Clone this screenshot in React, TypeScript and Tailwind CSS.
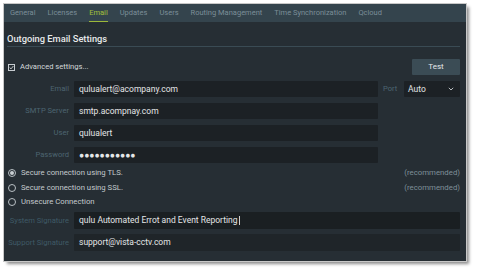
import React from "react";

const tabs = ["General", "Licenses", "Email", "Updates", "Users", "Routing Management", "Time Synchronization", "Qcloud"];

function Row({ label, value, wide, children }: { label: string; value: string; wide?: boolean; children?: React.ReactNode }) {
  return (
    <div className="flex items-center h-[16px]">
      <div className="w-[62px] text-right text-[7.6px] text-[#4d6571] leading-none whitespace-nowrap">{label}</div>
      <div className={`ml-[5px] h-full bg-[#1c2125] rounded-[1px] flex items-center pl-[5px] text-[8.5px] text-[#e4e6e7] ${wide ? "w-[386px]" : "w-[304px]"}`}>
        {value}
      </div>
      {children}
    </div>
  );
}

function Radio({ label, checked, rec }: { label: string; checked?: boolean; rec?: boolean }) {
  return (
    <div className="flex items-center h-[14.5px]">
      <div className="ml-[1px] w-[8px] h-[8px] rounded-full border border-[#b9c0c4] flex items-center justify-center">
        {checked && <div className="w-[4px] h-[4px] rounded-full bg-[#c9cfd2]" />}
      </div>
      <div className="ml-[5px] text-[7.75px] text-[#c4cacd] leading-none">{label}</div>
      {rec && <div className="ml-auto text-[7.8px] text-[#7f8f99] leading-none">(recommended)</div>}
    </div>
  );
}

export default function App() {
  return (
    <div className="w-[477px] h-[272px] bg-white pl-[4px] pt-[4px]" style={{ fontFamily: "Roboto, 'Liberation Sans', sans-serif" }}>
      <div className="w-[462px] h-[257px] bg-[#262e34] shadow-[3px_3px_3px_rgba(0,0,0,0.45)] outline outline-1 outline-[#c8c8c8] flex flex-col">
        <div className="h-[18px] bg-[#34444d] flex items-stretch pl-[6px] gap-[12px]">
          {tabs.map((t) => (
            <div key={t} className="relative flex items-center text-[7.5px] leading-none whitespace-nowrap">
              <span className={t === "Email" ? "text-[#a3c13b]" : "text-[#7b8e98]"}>{t}</span>
              {t === "Email" && <div className="absolute left-0 right-0 bottom-[0px] h-[1.5px] bg-[#9cb83a]" />}
            </div>
          ))}
        </div>
        <div className="pl-[3px] pr-[6px] flex flex-col">
          <div className="h-[25px] flex items-end pb-[1px] border-b border-[#3a4b54]">
            <span className="text-[9.3px] font-medium leading-[12px] text-[#e8eaeb]">Outgoing Email Settings</span>
          </div>
          <div className="mt-[12px] h-[16px] flex items-center">
            <div className="ml-[1px] w-[7px] h-[7px] border border-[#c6ccd0] flex items-center justify-center">
              <svg width="5" height="5" viewBox="0 0 5 5"><path d="M0.6 2.5 L2 3.9 L4.4 1" stroke="#d0d5d8" strokeWidth="0.9" fill="none" /></svg>
            </div>
            <span className="ml-[5px] text-[7.6px] text-[#d3d8da] leading-none">Advanced settings...</span>
            <div className="ml-auto w-[48px] h-[16px] bg-[#3b4c55] rounded-[1px] flex items-center justify-center text-[8px] text-[#e6e9ea]">Test</div>
          </div>
          <div className="mt-[6px] flex flex-col gap-[6px]">
            <Row label="Email" value="qulualert@acompany.com">
              <span className="ml-[5px] text-[7.6px] text-[#4d6571] leading-none">Port</span>
              <div className="ml-auto w-[56px] h-full bg-[#1c2125] rounded-[1px] flex items-center pl-[4px] pr-[6px] text-[8.5px] text-[#e4e6e7]">
                Auto
                <svg className="ml-auto" width="6" height="4" viewBox="0 0 6 4"><path d="M0.8 0.8 L3 3 L5.2 0.8" stroke="#c9ced1" strokeWidth="0.9" fill="none" /></svg>
              </div>
            </Row>
            <Row label="SMTP Server" value="smtp.acompnay.com" />
            <Row label="User" value="qulualert" />
            <Row label="Password" value="●●●●●●●●●●●" />
          </div>
          <div className="mt-[3px] flex flex-col">
            <Radio label="Secure connection using TLS." checked rec />
            <Radio label="Secure connection using SSL." rec />
            <Radio label="Unsecure Connection" />
          </div>
          <div className="mt-[2.5px] flex flex-col gap-[5px]">
            <div className="flex items-center h-[17px]">
              <div className="w-[62px] text-right text-[7.6px] text-[#3f5a66] leading-none whitespace-nowrap">System Signature</div>
              <div className="ml-[5px] w-[386px] h-full bg-[#1a1f22] rounded-[1px] flex items-center pl-[5px] text-[8.5px] text-[#e4e6e7]">
                qulu Automated Errot and Event Reporting<span className="ml-[1px] w-[1px] h-[9px] bg-[#d0d0d0]" />
              </div>
            </div>
            <div className="flex items-center h-[17px]">
              <div className="w-[62px] text-right text-[7.6px] text-[#3f5a66] leading-none whitespace-nowrap">Support Signature</div>
              <div className="ml-[5px] w-[386px] h-full bg-[#1f2529] rounded-[1px] flex items-center pl-[5px] text-[8.5px] text-[#e4e6e7]">
                support@vista-cctv.com
              </div>
            </div>
          </div>
        </div>
      </div>
    </div>
  );
}
